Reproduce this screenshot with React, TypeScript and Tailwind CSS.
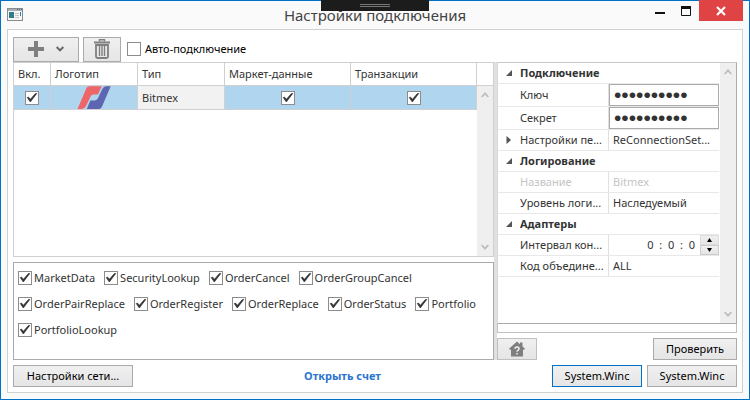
import type { ReactNode } from 'react'

const permissions = [
    ['MarketData', 'SecurityLookup', 'OrderCancel', 'OrderGroupCancel'],
    [
        'OrderPairReplace',
        'OrderRegister',
        'OrderReplace',
        'OrderStatus',
        'Portfolio',
    ],
    ['PortfolioLookup'],
]

const Check = ({
    id,
    label,
    checked = false,
}: {
    id: string
    label?: string
    checked?: boolean
}) => (
    <span className="inline-grid size-[14px] shrink-0">
        <input
            id={id}
            type="checkbox"
            aria-label={label}
            defaultChecked={checked}
            className="peer appearance-none [grid-area:1/1] size-[14px] border border-[#8c8c8c] bg-white"
        />
        <svg
            viewBox="0 0 14 14"
            className="[grid-area:1/1] size-[14px] hidden peer-checked:block pointer-events-none"
        >
            <path
                d="M2.3 6.6 L5.3 11 L11.8 2.4 L10.4 2.6 L5.4 8.3 L3.4 6 Z"
                fill="#333"
                stroke="#333"
                strokeWidth="0.7"
            />
        </svg>
    </span>
)

const Button = ({
    children,
    className = '',
    label,
}: {
    children: ReactNode
    className?: string
    label?: string
}) => (
    <button
        type="button"
        aria-label={label}
        className={`flex items-center justify-center border bg-linear-to-b from-[#f0f0f0] to-[#e5e5e5] text-black whitespace-nowrap ${className}`}
    >
        {children}
    </button>
)

const Chevron = ({ down = false }: { down?: boolean }) => (
    <svg
        viewBox="0 0 8 6"
        width={8}
        height={6}
        fill="none"
        stroke="#bdbdbd"
        strokeWidth="1.8"
    >
        <path d={down ? 'M0.7 1 L4 4.6 L7.3 1' : 'M0.7 5 L4 1.4 L7.3 5'} />
    </svg>
)

const ScrollBar = () => (
    <div className="flex h-full w-4 shrink-0 flex-col items-center justify-between bg-[#efefef] py-[6px]">
        <Chevron />
        <Chevron down />
    </div>
)

const Category = ({ title }: { title: string }) => (
    <div className="flex h-[21px] items-center border-b border-[#e8e8e8] pl-2 font-bold">
        <svg viewBox="0 0 6 6" width={6} height={6} className="mr-2">
            <path d="M6 0 V6 H0 Z" fill="#555" />
        </svg>
        {title}
    </div>
)

const Property = ({
    name,
    htmlFor,
    tall = false,
    expandable = false,
    disabled = false,
    children,
}: {
    name: string
    htmlFor?: string
    tall?: boolean
    expandable?: boolean
    disabled?: boolean
    children: ReactNode
}) => (
    <div
        className={`flex border-b border-[#e8e8e8] whitespace-nowrap ${
            tall ? 'h-[23px]' : 'h-[21px]'
        } ${disabled ? 'text-[#c4c4c4]' : ''}`}
    >
        <label
            htmlFor={htmlFor}
            className="flex w-[111px] shrink-0 items-center border-r border-[#e0e0e0] pl-2"
        >
            <span className="mr-2 w-[6px] shrink-0">
                {expandable && (
                    <svg viewBox="0 0 5 8" width={5} height={8}>
                        <path d="M0.5 0 L5 4 L0.5 8 Z" fill="#555" />
                    </svg>
                )}
            </span>
            {name}
        </label>
        <div className="flex min-w-0 flex-1 items-center">{children}</div>
    </div>
)

const Secret = ({ id }: { id: string }) => (
    <input
        id={id}
        type="password"
        defaultValue="0123456789"
        className="h-[22px] w-full min-w-0 border border-[#ababab] bg-white px-1 font-['Liberation_Sans'] text-[21px]"
    />
)

const BitmexLogo = () => (
    <svg viewBox="0 0 34 23" width={34} height={23} className="mx-auto">
        <path
            d="M0.5 23 L9.5 2 Q10.3 0.3 12.5 0.3 H24.7 L21 8.6 H16.5 Q14.5 8.6 13.6 10.5 L9 20 Q7.6 23 5 23 Z"
            fill="#ee6668"
        />
        <path
            d="M33.7 0.3 L24.8 21 Q24 23 21.8 23 H9.8 L13.3 14.4 H18 Q20 14.4 20.8 12.6 L25.2 3.3 Q26.6 0.3 29.2 0.3 Z"
            fill="#5d66b0"
        />
    </svg>
)

const headers = ['Вкл.', 'Логотип', 'Тип', 'Маркет-данные', 'Транзакции', '']

const App = () => {
    return (
        <div className="relative flex h-screen w-full flex-col border border-[#0072c6] bg-[#fafafa] px-[6px] pb-[6px] font-['Noto_Sans',sans-serif] text-[11px] leading-4 text-[#333]">
            <div className="absolute -top-px left-[320px] flex h-[11px] w-[108px] flex-col items-center gap-px bg-[#1c1c1c] pt-1">
                <span className="h-px w-[30px] bg-[#777]" />
                <span className="h-px w-[30px] bg-[#777]" />
            </div>
            <header className="flex h-7 shrink-0 justify-between">
                <div className="w-[104px] pt-[7px]">
                    <svg viewBox="0 0 16 13" width={16} height={13}>
                        <rect x="0.5" y="0.5" width="15" height="12" fill="#f6f6f6" stroke="#858b91" />
                        <rect x="1" y="1" width="14" height="2" fill="#a9afb5" />
                        <path d="M10 1.5 H11 M12 1.5 H13 M14 1.5 H15" stroke="#5f666d" />
                        <rect x="2" y="4" width="5" height="6" fill="#2f7d8c" />
                        <path d="M8 5.5 H12 M8 7.5 H12 M8 9.5 H12" stroke="#c5c5c5" />
                        <rect x="13" y="4" width="1" height="4" fill="#2f7db0" />
                    </svg>
                </div>
                <h1 className="pt-[2px] text-[15px] leading-6 text-[#444]">
                    Настройки подключения
                </h1>
                <div className="flex w-[104px] items-start justify-end">
                    <button
                        type="button"
                        aria-label="Свернуть"
                        className="flex h-5 w-[26px] items-center justify-center"
                    >
                        <svg viewBox="0 0 10 10" width={10} height={10}>
                            <path d="M0 7 H10" stroke="#111" strokeWidth="2" />
                        </svg>
                    </button>
                    <button
                        type="button"
                        aria-label="Развернуть"
                        className="flex h-5 w-[26px] items-center justify-center"
                    >
                        <svg viewBox="0 0 10 10" width={10} height={10}>
                            <path d="M0 1.5 H10" stroke="#111" strokeWidth="3" />
                            <path d="M0.5 1 V9.5 H9.5 V1" stroke="#111" fill="none" />
                        </svg>
                    </button>
                    <button
                        type="button"
                        aria-label="Закрыть"
                        className="-mt-px flex h-[21px] w-11 items-center justify-center bg-[#e04343]"
                    >
                        <svg viewBox="0 0 10 10" width={10} height={10}>
                            <path d="M1 1 L9 9 M9 1 L1 9" stroke="#fff" strokeWidth="2.2" />
                        </svg>
                    </button>
                </div>
            </header>

            <main className="flex min-h-0 flex-1 flex-col border border-[#d0d0d0] bg-white px-[5px] pb-[5px]">
                <div className="flex h-8 shrink-0 items-center gap-1 pt-[6px]">
                    <Button label="Добавить" className="h-[25px] w-[66px] gap-3 border-[#ababab]">
                        <svg viewBox="0 0 16 16" width={16} height={16}>
                            <path d="M6 0 H10 V6 H16 V10 H10 V16 H6 V10 H0 V6 H6 Z" fill="#7f7f7f" />
                        </svg>
                        <svg viewBox="0 0 8 6" width={8} height={6} fill="none" stroke="#666" strokeWidth="2">
                            <path d="M0.7 1 L4 4.4 L7.3 1" />
                        </svg>
                    </Button>
                    <Button label="Удалить" className="h-[25px] w-[38px] border-[#ababab]">
                        <svg viewBox="0 0 16 20" width={16} height={20} fill="none" stroke="#7f7f7f">
                            <path d="M5.5 2.5 V0.8 H10.5 V2.5" strokeWidth="1.4" />
                            <path d="M0 3.5 H16" strokeWidth="2" />
                            <path d="M2 6 V17.5 Q2 19 3.5 19 H12.5 Q14 19 14 17.5 V6 Z" strokeWidth="1.8" />
                            <path d="M5.5 7 V17 M8 7 V17 M10.5 7 V17" strokeWidth="1.4" />
                        </svg>
                    </Button>
                    <label htmlFor="auto" className="flex items-center gap-1 pl-[2px] text-black">
                        <Check id="auto" />
                        Авто-подключение
                    </label>
                </div>

                <div className="flex min-h-0 flex-1">
                    <div className="flex min-w-0 flex-1 flex-col gap-[5px]">
                        <div className="min-h-0 flex-1">
                            <table className="h-full w-full table-fixed border-collapse border border-[#d0d0d0]">
                                <colgroup>
                                    <col className="w-[37px]" />
                                    <col className="w-[87px]" />
                                    <col className="w-[87px]" />
                                    <col />
                                    <col className="w-[126px]" />
                                    <col className="w-[17px]" />
                                </colgroup>
                                <thead>
                                    <tr className="h-[23px]">
                                        {headers.map((header, i) => (
                                            <th
                                                key={i}
                                                className="border border-[#d0d0d0] p-0 pl-1 text-left font-normal whitespace-nowrap"
                                            >
                                                {header}
                                            </th>
                                        ))}
                                    </tr>
                                </thead>
                                <tbody>
                                    <tr className="h-6 bg-[#b0d5ee]">
                                        <td className="border border-[#d0d0d0] p-0">
                                            <span className="flex justify-center">
                                                <Check id="enabled" label="Вкл." checked />
                                            </span>
                                        </td>
                                        <td className="border border-[#d0d0d0] p-0">
                                            <BitmexLogo />
                                        </td>
                                        <td className="border border-[#d0d0d0] bg-[#f2f2f2] p-0 pl-1">
                                            Bitmex
                                        </td>
                                        <td className="border border-[#d0d0d0] p-0">
                                            <span className="flex justify-center">
                                                <Check id="market" label="Маркет-данные" checked />
                                            </span>
                                        </td>
                                        <td className="border border-[#d0d0d0] p-0">
                                            <span className="flex justify-center">
                                                <Check id="transactions" label="Транзакции" checked />
                                            </span>
                                        </td>
                                        <td rowSpan={2} className="h-px bg-[#efefef] p-0">
                                            <ScrollBar />
                                        </td>
                                    </tr>
                                    <tr>
                                        <td colSpan={5} />
                                    </tr>
                                </tbody>
                            </table>
                        </div>
                        <div className="flex h-[98px] shrink-0 flex-col gap-[10px] border border-[#ababab] px-1 pt-[7px]">
                            {permissions.map((line) => (
                                <div key={line[0]} className="flex gap-[9px]">
                                    {line.map((name) => (
                                        <label
                                            key={name}
                                            htmlFor={name}
                                            className="flex items-center gap-[2px]"
                                        >
                                            <Check id={name} checked />
                                            {name}
                                        </label>
                                    ))}
                                </div>
                            ))}
                        </div>
                    </div>

                    <div className="w-[3px] shrink-0 bg-[#e0e0e0]" />

                    <div className="flex w-60 shrink-0 flex-col">
                        <div className="flex min-h-0 flex-1 border border-[#ababab] border-t-[#c8c8c8] border-l-[#d8d8d8]">
                            <div className="min-w-0 flex-1 pr-px">
                                <Category title="Подключение" />
                                <Property name="Ключ" htmlFor="key" tall>
                                    <Secret id="key" />
                                </Property>
                                <Property name="Секрет" htmlFor="secret" tall>
                                    <Secret id="secret" />
                                </Property>
                                <Property name="Настройки пе..." expandable>
                                    <span className="pl-1">ReConnectionSet...</span>
                                </Property>
                                <Category title="Логирование" />
                                <Property name="Название" disabled>
                                    <span className="pl-1">Bitmex</span>
                                </Property>
                                <Property name="Уровень логи...">
                                    <span className="pl-1">Наследуемый</span>
                                </Property>
                                <Category title="Адаптеры" />
                                <Property name="Интервал кон..." htmlFor="interval">
                                    <input
                                        id="interval"
                                        type="text"
                                        defaultValue="0  :  0  :  0"
                                        className="w-full min-w-0 pr-[5px] text-right"
                                    />
                                    <span className="flex w-[19px] shrink-0 flex-col">
                                        <Button label="Увеличить" className="h-[10px] border-[#ddd]">
                                            <svg viewBox="0 0 5 4" width={5} height={4}>
                                                <path d="M2.5 0 L5 4 H0 Z" />
                                            </svg>
                                        </Button>
                                        <Button label="Уменьшить" className="h-[10px] border-[#ccc]">
                                            <svg viewBox="0 0 5 4" width={5} height={4}>
                                                <path d="M2.5 4 L5 0 H0 Z" />
                                            </svg>
                                        </Button>
                                    </span>
                                </Property>
                                <Property name="Код объедине...">
                                    <span className="pl-1">ALL</span>
                                </Property>
                            </div>
                            <ScrollBar />
                        </div>
                        <div className="h-[9px] shrink-0 border-x border-b border-[#c0c0c0]" />
                        <div className="mt-[5px] flex shrink-0 justify-between">
                            <Button label="Справка" className="h-[22px] w-10 border-[#c0c0c0]">
                                <svg viewBox="0 0 16 16" width={16} height={16}>
                                    <path
                                        d="M8 0.5 L11 3.2 V1.5 H13.5 V5.5 L16 7.8 L15 8.8 H14 V15.5 H2 V8.8 H1 L0 7.8 Z"
                                        fill="#7f7f7f"
                                    />
                                    <path
                                        d="M6 7.8 Q6 6 8 6 Q10 6 10 7.7 Q10 8.7 8.9 9.3 Q8 9.8 8 10.8 M8 12 V13.5"
                                        fill="none"
                                        stroke="#f0f0f0"
                                        strokeWidth="1.5"
                                    />
                                </svg>
                            </Button>
                            <Button className="h-[22px] w-[84px] border-[#ababab]">
                                Проверить
                            </Button>
                        </div>
                    </div>
                </div>

                <footer className="mt-[5px] flex shrink-0 items-center justify-between">
                    <Button className="h-[22px] w-[120px] border-[#ababab]">
                        Настройки сети...
                    </Button>
                    <a href="#account" className="font-bold text-[#2a75d0]">
                        Открыть счет
                    </a>
                    <div className="flex gap-[5px]">
                        <Button className="h-[22px] w-[90px] border-[#0072c6]">
                            System.Winc
                        </Button>
                        <Button className="h-[22px] w-[90px] border-[#ababab]">
                            System.Winc
                        </Button>
                    </div>
                </footer>
            </main>
        </div>
    )
}

export default App
